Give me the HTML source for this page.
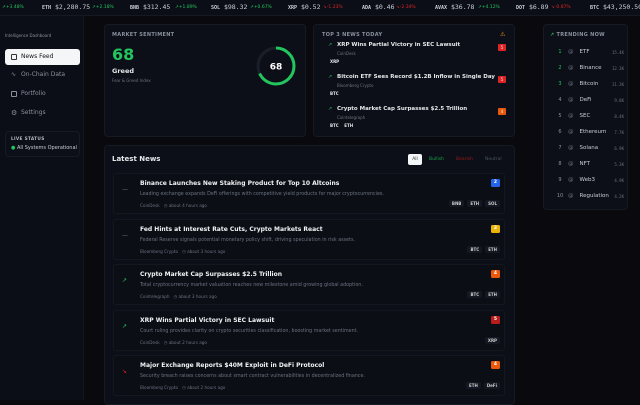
<!DOCTYPE html><html><head><style>
*{margin:0;padding:0;box-sizing:border-box}
body{width:640px;height:400px;overflow:hidden;background:#0a0a0e;font-family:"DejaVu Sans","Liberation Sans",sans-serif;color:#e5e7eb;position:relative}
.abs{position:absolute}
.top{left:0;top:0;width:640px;height:16px;background:#0b0e16;border-bottom:1px solid #151922;font-size:6.5px;white-space:nowrap;line-height:15px}
.top span{position:absolute}
.m{font-family:"DejaVu Sans Mono",monospace;color:#c9ced6}
.g{color:#22c55e;font-size:4.5px}.r{color:#dc2626;font-size:4.5px}
.side{left:0;top:16px;width:84px;height:384px;background:#0b0e16;border-right:1px solid #14171f}
.card{background:#0c0f17;border:1px solid #161a22;border-radius:4px}
.lbl{font-size:5px;font-weight:bold;color:#8a909c;letter-spacing:.3px}
.nav{position:absolute;left:5px;width:75px;height:16px;font-size:6px;color:#8a909c;line-height:16px;padding-left:16px}
.item{position:absolute;left:113px;width:392px;height:41px;border:1px solid #131720;border-radius:3px;background:#0b0e15}
.item .t{position:absolute;left:26px;top:6px;font-size:6px;font-weight:bold;color:#f3f4f6}
.item .d{position:absolute;left:26px;top:18px;font-size:4.8px;color:#6b7280}
.item .s{position:absolute;left:26px;top:29px;font-size:4.2px;color:#6b7280}
.item .b{position:absolute;right:4px;top:5px;width:9px;height:8px;border-radius:1.5px;font-size:4.5px;color:#fff;text-align:center;line-height:8px;font-weight:bold}
.item .tg{position:absolute;right:4px;top:27px;font-size:4px;font-weight:bold;color:#ccc}
.item .tg i{font-style:normal;background:#141822;padding:1px 3px;margin-left:3px;border-radius:2px}
.item .ic{position:absolute;left:8px;top:12px;font-size:6px}
.tr{position:absolute;left:554px;font-size:5.5px;color:#c9ced6;width:70px}
.tr b{display:inline-block;width:12px;font-weight:normal;font-size:5px;color:#8a909c;text-align:center}
.tr em{font-style:normal;color:#6b7280;margin:0 6px 0 2px}
.tr u{text-decoration:none;position:absolute;right:0;font-family:"DejaVu Sans Mono",monospace;font-size:4px;color:#6b7280;top:1px}
</style></head><body>
<div class="abs top">
<span class="g" style="left:2px">↗+3.48%</span>
<span class="m" style="left:42px"><b style="font-size:5px">ETH</b> $2,280.75</span><span class="g" style="left:92px">↗+2.18%</span>
<span class="m" style="left:130px"><b style="font-size:5px">BNB</b> $312.45</span><span class="g" style="left:175px">↗+1.89%</span>
<span class="m" style="left:211px"><b style="font-size:5px">SOL</b> $98.32</span><span class="g" style="left:250px">↗+0.67%</span>
<span class="m" style="left:288px"><b style="font-size:5px">XRP</b> $0.52</span><span class="r" style="left:323px">↘-1.23%</span>
<span class="m" style="left:362px"><b style="font-size:5px">ADA</b> $0.46</span><span class="r" style="left:396px">↘-2.34%</span>
<span class="m" style="left:435px"><b style="font-size:5px">AVAX</b> $36.78</span><span class="g" style="left:478px">↗+4.12%</span>
<span class="m" style="left:516px"><b style="font-size:5px">DOT</b> $6.89</span><span class="r" style="left:551px">↘-0.87%</span>
<span class="m" style="left:590px"><b style="font-size:5px">BTC</b> $43,250.50</span>
</div>
<div class="abs side"></div>
<div class="abs" style="left:5px;top:33px;font-size:4px;color:#8a909c">Intelligence Dashboard</div>
<div class="nav" style="top:49px;background:#f5f6f8;color:#111;border-radius:3px">News Feed</div>
<div class="abs" style="left:11px;top:54px;width:6px;height:6px;border:1px solid #333;border-radius:1px"></div>
<div class="nav" style="top:67px">On-Chain Data</div><div class="abs" style="left:11px;top:71px;font-size:6px;color:#8a909c">∿</div>
<div class="nav" style="top:86px">Portfolio</div><div class="abs" style="left:11px;top:91px;width:6px;height:6px;border:1px solid #8a909c;border-radius:1px"></div>
<div class="nav" style="top:105px">Settings</div><div class="abs" style="left:11px;top:109px;font-size:7px;color:#8a909c">⚙</div>
<div class="abs card" style="left:5px;top:131px;width:75px;height:26px"></div>
<div class="abs lbl" style="left:11px;top:137px;font-size:4.3px;color:#b0b6c0">LIVE STATUS</div>
<div class="abs" style="left:11px;top:145px;font-size:5px;color:#c9ced6"><span style="color:#22c55e">●</span> All Systems Operational</div>

<div class="abs card" style="left:104px;top:24px;width:202px;height:113px"></div>
<div class="abs lbl" style="left:112px;top:32px">MARKET SENTIMENT</div>
<div class="abs" style="left:112px;top:45px;font-size:16px;font-weight:bold;color:#22c55e">68</div>
<div class="abs" style="left:112px;top:67px;font-size:6.5px;font-weight:bold">Greed</div>
<div class="abs" style="left:112px;top:78px;font-size:4px;color:#6b7280">Fear &amp; Greed Index</div>
<svg class="abs" style="left:255px;top:45px" width="42" height="42"><circle cx="21" cy="21" r="18" fill="none" stroke="#1a1e27" stroke-width="3"/><circle cx="21" cy="21" r="18" fill="none" stroke="#22c55e" stroke-width="3" stroke-dasharray="76.9 113" transform="rotate(-90 21 21)"/><text x="21" y="24.5" text-anchor="middle" fill="#fff" font-size="9" font-weight="bold" font-family="DejaVu Sans">68</text></svg>

<div class="abs card" style="left:313px;top:24px;width:202px;height:113px"></div>
<div class="abs lbl" style="left:322px;top:32px">TOP 3 NEWS TODAY</div>
<div class="abs" style="left:500px;top:31px;font-size:6px;color:#f59e0b">⚠</div>
<div class="abs" style="left:328px;top:42px;font-size:5px;color:#22c55e">↗</div>
<div class="abs" style="left:337px;top:42px;font-size:5.5px;font-weight:bold">XRP Wins Partial Victory in SEC Lawsuit</div>
<div class="abs" style="left:337px;top:51px;font-size:4px;color:#6b7280">CoinDesk</div>
<div class="abs" style="left:330px;top:59px;font-size:4px;font-weight:bold">XRP</div>
<div class="abs" style="left:498px;top:44px;width:8px;height:7px;background:#dc2626;border-radius:1px;font-size:4px;text-align:center;line-height:7px">5</div>
<div class="abs" style="left:328px;top:74px;font-size:5px;color:#22c55e">↗</div>
<div class="abs" style="left:337px;top:74px;font-size:5.5px;font-weight:bold">Bitcoin ETF Sees Record $1.2B Inflow in Single Day</div>
<div class="abs" style="left:337px;top:83px;font-size:4px;color:#6b7280">Bloomberg Crypto</div>
<div class="abs" style="left:330px;top:91px;font-size:4px;font-weight:bold">BTC</div>
<div class="abs" style="left:498px;top:76px;width:8px;height:7px;background:#dc2626;border-radius:1px;font-size:4px;text-align:center;line-height:7px">5</div>
<div class="abs" style="left:328px;top:106px;font-size:5px;color:#22c55e">↗</div>
<div class="abs" style="left:337px;top:106px;font-size:5.5px;font-weight:bold">Crypto Market Cap Surpasses $2.5 Trillion</div>
<div class="abs" style="left:337px;top:115px;font-size:4px;color:#6b7280">Cointelegraph</div>
<div class="abs" style="left:330px;top:123px;font-size:4px;font-weight:bold">BTC &nbsp;&nbsp; ETH</div>
<div class="abs" style="left:498px;top:108px;width:8px;height:7px;background:#ea580c;border-radius:1px;font-size:4px;text-align:center;line-height:7px">4</div>

<div class="abs card" style="left:543px;top:24px;width:85px;height:186px"></div>
<div class="abs lbl" style="left:550px;top:32px"><span style="color:#22c55e">↗</span> TRENDING NOW</div>
<div class="tr" style="top:49px"><b style="color:#22c55e">1</b><em>@</em>ETF<u>15.4K</u></div>
<div class="tr" style="top:65px"><b style="color:#22c55e">2</b><em>@</em>Binance<u>12.3K</u></div>
<div class="tr" style="top:81px"><b style="color:#22c55e">3</b><em>@</em>Bitcoin<u>11.3K</u></div>
<div class="tr" style="top:97px"><b>4</b><em>@</em>DeFi<u>9.8K</u></div>
<div class="tr" style="top:113px"><b>5</b><em>@</em>SEC<u>8.4K</u></div>
<div class="tr" style="top:129px"><b>6</b><em>@</em>Ethereum<u>7.7K</u></div>
<div class="tr" style="top:145px"><b>7</b><em>@</em>Solana<u>6.9K</u></div>
<div class="tr" style="top:161px"><b>8</b><em>@</em>NFT<u>5.3K</u></div>
<div class="tr" style="top:177px"><b>9</b><em>@</em>Web3<u>4.9K</u></div>
<div class="tr" style="top:193px"><b>10</b><em>@</em>Regulation<u>4.2K</u></div>

<div class="abs card" style="left:104px;top:145px;width:411px;height:260px"></div>
<div class="abs" style="left:112px;top:155px;font-size:7px;font-weight:bold">Latest News</div>
<div class="abs" style="left:408px;top:154px;width:14px;height:11px;background:#f5f6f8;border-radius:2px;color:#333;font-size:4.5px;text-align:center;line-height:11px">All</div>
<div class="abs" style="left:429px;top:157px;font-size:4.5px;color:#16a34a">Bullish</div>
<div class="abs" style="left:456px;top:157px;font-size:4.5px;color:#991b1b">Bearish</div>
<div class="abs" style="left:485px;top:157px;font-size:4.5px;color:#4b5563">Neutral</div>

<div class="item" style="top:173px"><span class="ic" style="color:#6b7280">—</span><div class="t">Binance Launches New Staking Product for Top 10 Altcoins</div><div class="d">Leading exchange expands DeFi offerings with competitive yield products for major cryptocurrencies.</div><div class="s">CoinDesk &nbsp; ◷ about 4 hours ago</div><div class="b" style="background:#2563eb">2</div><div class="tg"><i>BNB</i><i>ETH</i><i>SOL</i></div></div>
<div class="item" style="top:219px"><span class="ic" style="color:#6b7280">—</span><div class="t">Fed Hints at Interest Rate Cuts, Crypto Markets React</div><div class="d">Federal Reserve signals potential monetary policy shift, driving speculation in risk assets.</div><div class="s">Bloomberg Crypto &nbsp; ◷ about 3 hours ago</div><div class="b" style="background:#eab308">3</div><div class="tg"><i>BTC</i><i>ETH</i></div></div>
<div class="item" style="top:264px"><span class="ic" style="color:#22c55e">↗</span><div class="t">Crypto Market Cap Surpasses $2.5 Trillion</div><div class="d">Total cryptocurrency market valuation reaches new milestone amid growing global adoption.</div><div class="s">Cointelegraph &nbsp; ◷ about 3 hours ago</div><div class="b" style="background:#ea580c">4</div><div class="tg"><i>BTC</i><i>ETH</i></div></div>
<div class="item" style="top:310px"><span class="ic" style="color:#22c55e">↗</span><div class="t">XRP Wins Partial Victory in SEC Lawsuit</div><div class="d">Court ruling provides clarity on crypto securities classification, boosting market sentiment.</div><div class="s">CoinDesk &nbsp; ◷ about 2 hours ago</div><div class="b" style="background:#b91c1c">5</div><div class="tg"><i>XRP</i></div></div>
<div class="item" style="top:355px"><span class="ic" style="color:#dc2626">↘</span><div class="t">Major Exchange Reports $40M Exploit in DeFi Protocol</div><div class="d">Security breach raises concerns about smart contract vulnerabilities in decentralized finance.</div><div class="s">Bloomberg Crypto &nbsp; ◷ about 2 hours ago</div><div class="b" style="background:#ea580c">4</div><div class="tg"><i>ETH</i><i>DeFi</i></div></div>
</body></html>
